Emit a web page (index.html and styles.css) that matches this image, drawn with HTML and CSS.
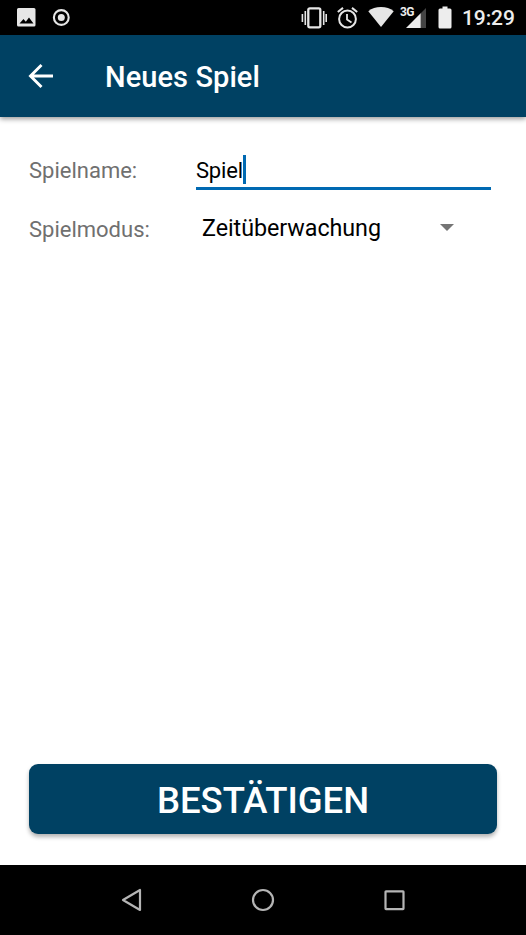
FILE: index.html
```html
<!DOCTYPE html>
<html lang="de">
<head>
<meta charset="utf-8">
<title>Neues Spiel</title>
<link rel="stylesheet" href="styles.css">
</head>
<body>
<div class="screen">
  <div class="status-bar">
    <svg class="icon-picture" width="20" height="20" viewBox="0 0 20 20"><path fill="#e6e6e6" fill-rule="evenodd" d="M1.500 0h15.500q1.500 0 1.500 1.500v15.500q0 1.500-1.500 1.500H1.500Q0 18.500 0 17V1.500Q0 0 1.500 0ZM2.500 15.500h14l-4.500-6-3.200 4.200L6.500 11Z"/></svg>
    <svg class="icon-record" width="18" height="18" viewBox="0 0 18 18"><circle cx="9.300" cy="8.500" r="7.400" fill="none" stroke="#e6e6e6" stroke-width="2.100"/><circle cx="9.300" cy="8.500" r="3.500" fill="#e6e6e6"/></svg>
    <svg class="icon-vibrate" width="26" height="22" viewBox="0 0 26 22" fill="none" stroke="#e6e6e6"><rect x="7.300" y="1.300" width="12" height="19" rx="1.500" stroke-width="2.300"/><path stroke-width="1.600" d="M4.300 4v14M1.400 7v8M22.700 4v14M25.200 7v8"/></svg>
    <svg class="icon-alarm" width="21" height="22" viewBox="0 0 21 22" fill="none" stroke="#e6e6e6" stroke-width="2"><circle cx="10.500" cy="12" r="8.400"/><path d="M.800 5 6 .900M15 .900 20.200 5"/><path stroke-width="1.800" d="M10 7v5.500l4.500 3"/></svg>
    <svg class="icon-wifi" width="26" height="21" viewBox="0 0 26 21"><path fill="#e6e6e6" d="M13 20 .300 4.200Q5.500 0 13 0T25.700 4.200Z"/></svg>
    <div class="signal">
      <span class="signal-type">3G</span>
      <svg class="signal-bars" width="20" height="20" viewBox="0 0 20 20"><path fill="#444" d="M14.500 5.500 20 0v20h-5.500Z"/><path fill="#ededed" d="M0 20 14.700 5.300V20Z"/></svg>
    </div>
    <svg class="icon-battery" width="14" height="23" viewBox="0 0 14 23"><path fill="#ededed" d="M4.500.5h5v2H12q1.500 0 1.500 1.500v17q0 1.500-1.500 1.500H2Q.5 22.500.5 21V4Q.5 2.500 2 2.500h2.500Z"/></svg>
    <span class="clock">19:29</span>
  </div>
  <header class="app-bar">
    <svg width="26" height="26" viewBox="0 0 26 26" fill="none" stroke="#fff" stroke-width="2.900"><path d="M25 13H3M13.500 2 2.500 13l11 11"/></svg>
    <h1 class="title">Neues Spiel</h1>
  </header>
  <main class="content">
    <div class="row">
      <label class="label">Spielname:</label>
      <div class="field"><span class="field-text">Spiel</span><i class="caret"></i></div>
    </div>
    <div class="row row-mode">
      <label class="label">Spielmodus:</label>
      <div class="select"><span class="select-text">Zeitüberwachung</span>
        <svg class="select-arrow" width="14" height="7" viewBox="0 0 14 7"><path fill="#757575" d="M0 0h14L7 7Z"/></svg>
      </div>
    </div>
    <button class="confirm"><span class="confirm-text">BESTÄTIGEN</span></button>
  </main>
  <nav class="nav-bar">
    <svg width="24" height="24" viewBox="0 0 24 24"><path d="M20 2v20L3 12Z"/></svg>
    <svg width="24" height="24" viewBox="0 0 24 24"><circle cx="12" cy="12" r="10"/></svg>
    <svg width="24" height="24" viewBox="0 0 24 24"><rect x="3.500" y="3.300" width="18" height="17.800" rx=".5"/></svg>
  </nav>
</div>
</body>
</html>
```
FILE: styles.css
```css
* { box-sizing: border-box; }
body { margin: 0; font-family: Roboto, sans-serif; }
svg { display: block; flex: none; }
.screen { width: 526px; height: 935px; display: flex; flex-direction: column; background: #fff; overflow: hidden; }
.status-bar { height: 35px; flex: none; background: #000; display: flex; align-items: center; padding-left: 17px; color: #ededed; white-space: nowrap; }
.icon-record { margin-left: 15px; }
.icon-vibrate { margin-left: 231px; }
.icon-alarm { margin-left: 10px; }
.icon-wifi { margin-left: 10px; }
.signal { position: relative; width: 27px; height: 20px; margin: 1px 0 0 6px; }
.signal-type { position: absolute; left: 0; top: -2px; font-size: 12px; line-height: 12px; font-weight: 700; letter-spacing: -.7px; }
.signal-bars { margin-left: 6px; }
.icon-battery { margin-left: 11px; }
.clock { margin: 2px 0 0 10px; font-size: 21px; font-weight: 500; line-height: 33px; letter-spacing: -.1px; }
.app-bar { height: 82px; flex: none; background: #004163; display: flex; align-items: center; padding-left: 28px; color: #fff; box-shadow: 0 2px 5px rgba(0,0,0,.4); }
.title { margin: 2px 0 0 51px; font-size: 29px; line-height: 34px; font-weight: 500; letter-spacing: .08px; }
.content { flex: 1; display: flex; flex-direction: column; padding: 36px 29px 31px; }
.row { display: flex; height: 37px; }
.row-mode { margin-top: 22px; }
.label { width: 167px; padding-top: 4px; font-size: 22px; line-height: 27px; color: #707070; }
.field { width: 295px; height: 37px; display: flex; border-bottom: 3px solid #0069b2; }
.field-text { padding-top: 4px; font-size: 22px; line-height: 27px; letter-spacing: -.2px; color: #000; }
.caret { width: 3px; height: 29px; margin-top: 2px; background: #0069b2; }
.select { width: 258px; height: 32px; padding-left: 6px; display: flex; align-items: center; justify-content: space-between; font-size: 23.300px; line-height: 30px; color: #000; }
.select-text { letter-spacing: -.05px; }
.select-arrow { margin-bottom: 2px; }
.confirm { margin-top: auto; width: 468px; height: 70px; border: 0; border-radius: 9px; background: #004163; color: #fff; font: 500 36.500px/44px Roboto, sans-serif; box-shadow: 0 3px 4px rgba(0,0,0,.3); padding: 3px 0 0; }
.nav-bar { height: 70px; flex: none; background: #000; display: flex; justify-content: space-between; align-items: center; padding: 0 120px; }
.nav-bar svg { fill: none; stroke: #b5b5b5; stroke-width: 2.200; stroke-linejoin: round; }
```
